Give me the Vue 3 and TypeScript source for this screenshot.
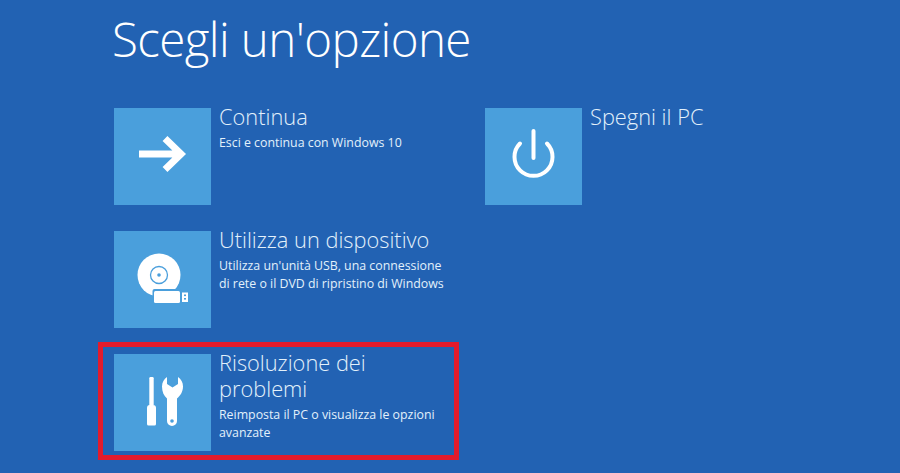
<script setup lang="ts">
interface Option {
  id: string
  title: string
  desc: string
  marked?: boolean
}

const leftOptions: Option[] = [
  { id: 'arrow', title: 'Continua', desc: 'Esci e continua con Windows 10' },
  {
    id: 'disc',
    title: 'Utilizza un dispositivo',
    desc: "Utilizza un'unità USB, una connessione di rete o il DVD di ripristino di Windows",
  },
  {
    id: 'tools',
    title: 'Risoluzione dei problemi',
    desc: 'Reimposta il PC o visualizza le opzioni avanzate',
    marked: true,
  },
]

const rightOptions: Option[] = [{ id: 'power', title: 'Spegni il PC', desc: '' }]
const columns = [leftOptions, rightOptions]
</script>

<template>
  <main class="screen">
    <h1 class="heading">Scegli un'opzione</h1>
    <div class="columns">
      <div v-for="(col, i) in columns" :key="i" class="column">
        <div v-for="opt in col" :key="opt.id" class="option" :class="{ marked: opt.marked }">
          <div class="tile">
            <svg v-if="opt.id === 'arrow'" viewBox="0 0 97 97" class="icon">
              <path d="M25 46H65M51 30.500L67 46L51 61.500" fill="none" stroke="#fff" stroke-width="7" />
            </svg>
            <svg v-else-if="opt.id === 'disc'" viewBox="0 0 97 97" class="icon">
              <circle cx="45" cy="44" r="21.500" fill="#fff" />
              <circle cx="45" cy="44" r="8.500" fill="none" stroke="#4a9fdc" stroke-width="1.300" />
              <circle cx="45" cy="44" r="1.800" fill="#4a9fdc" />
              <rect x="38.500" y="58" width="29.500" height="15.500" rx="2" fill="#4a9fdc" />
              <rect x="40" y="60" width="26" height="12" rx="1.500" fill="#fff" />
              <rect x="68" y="61.500" width="6" height="9.500" fill="#fff" />
              <rect x="70" y="63.500" width="2" height="1.600" fill="#4a9fdc" />
              <rect x="70" y="67" width="2" height="1.600" fill="#4a9fdc" />
            </svg>
            <svg v-else-if="opt.id === 'tools'" viewBox="0 0 97 97" class="icon">
              <path d="M36.500 23h2a1.200 1.200 0 0 1 1.200 1.200V51h-4.400V24.200a1.200 1.200 0 0 1 1.200-1.200Z" fill="#fff" />
              <path d="M35.500 51h3.500c2 0 3 1 3 3V70a1.500 1.500 0 0 1-1.500 1.500H34.500A1.500 1.500 0 0 1 33 70V54c0-2 1-3 2.500-3Z" fill="#fff" />
              <path fill-rule="evenodd" fill="#fff" d="M53 23C50 25 48 28.500 48 32.500c0 5.500 2 9.500 5 12V67a5 5 0 0 0 5 5a5 5 0 0 0 5-5V44.500c3-2.500 6-6.500 6-12c0-4-2-7.500-5-9.500v7l-5.500 3.500L53 30Z" />
              <circle cx="58" cy="67" r="1.800" fill="#4a9fdc" />
            </svg>
            <svg v-else viewBox="0 0 97 97" class="icon">
              <path d="M35 35.500A19 19 0 1 0 62 35.500" fill="none" stroke="#fff" stroke-width="4" stroke-linecap="round" />
              <path d="M48.500 23V50" fill="none" stroke="#fff" stroke-width="4" stroke-linecap="round" />
            </svg>
          </div>
          <div class="copy">
            <h2 class="title">{{ opt.title }}</h2>
            <p v-if="opt.desc" class="desc">{{ opt.desc }}</p>
          </div>
        </div>
      </div>
    </div>
  </main>
</template>

<style>
html,
body {
  margin: 0;
  background: #2262b3;
}
</style>

<style scoped>
.screen {
  width: 900px;
  height: 473px;
  box-sizing: border-box;
  overflow: hidden;
  padding: 8px 0 0 112px;
  background: #2262b3;
  color: #fff;
  font-family: "Open Sans", "Noto Sans", "Liberation Sans", sans-serif;
}

.heading {
  margin: 0 0 38px;
  font-size: 47.500px;
  font-weight: 300;
  line-height: 62px;
  letter-spacing: -0.6px;
}

.columns {
  display: flex;
  padding-left: 2px;
}

.column {
  display: flex;
  flex-direction: column;
  gap: 26px;
  width: 371px;
}

.option {
  position: relative;
  display: flex;
  gap: 8px;
  height: 97px;
}

.marked::after {
  content: "";
  position: absolute;
  inset: -12px 26px -9px -16px;
  border: 5px solid #e31b2d;
}

.tile {
  flex: none;
  width: 97px;
  height: 97px;
  background: #4a9fdc;
}

.icon {
  display: block;
  width: 97px;
  height: 97px;
}

.copy {
  width: 232px;
}

.title {
  margin: -4px 0 0;
  font-size: 21.800px;
  font-weight: 300;
  line-height: 26px;
  color: #e3f1fb;
}

.desc {
  margin: 4px 0 0;
  font-size: 12.350px;
  font-weight: 400;
  line-height: 18px;
  color: #e3f1fb;
}
</style>
